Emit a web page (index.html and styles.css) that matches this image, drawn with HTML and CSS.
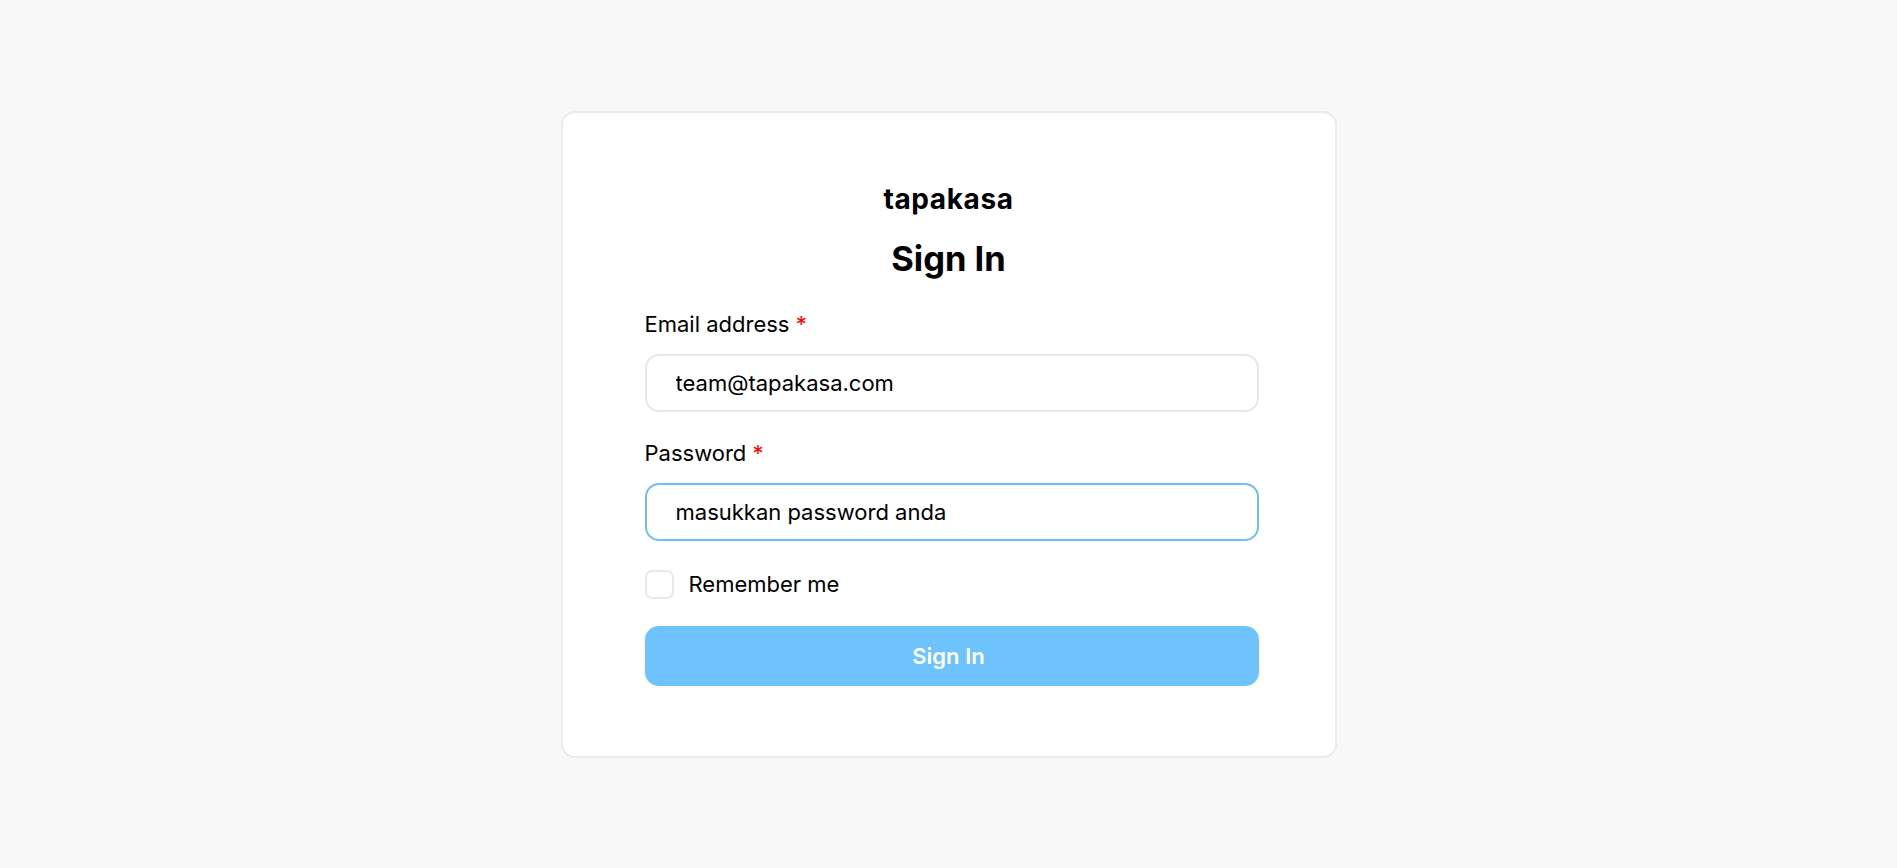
FILE: index.html
```html
<!DOCTYPE html>
<html lang="en">
<head>
<meta charset="utf-8">
<title>Sign In - tapakasa</title>
<link rel="stylesheet" href="styles.css">
</head>
<body>
<main class="page">
  <section class="card">
    <div class="brand">tapakasa</div>
    <h1 class="title">Sign In</h1>
    <form class="form">
      <div class="field">
        <label class="label" for="email">Email address <span class="req">*</span></label>
        <input class="input" id="email" type="text" value="team@tapakasa.com">
      </div>
      <div class="field">
        <label class="label" for="password">Password <span class="req">*</span></label>
        <input class="input input-focus" id="password" type="text" value="masukkan password anda">
      </div>
      <label class="remember">
        <span class="checkbox"></span>
        <span class="remember-text">Remember me</span>
      </label>
      <button class="btn" type="button">Sign In</button>
    </form>
  </section>
</main>
</body>
</html>
```
FILE: styles.css
```css
* { box-sizing: border-box; }
html, body { margin: 0; padding: 0; }
body {
  background: #f8f8f8;
  font-family: Inter, "Noto Sans", sans-serif;
  color: #000;
}
.page {
  min-height: 100vh;
  display: flex;
  align-items: center;
  justify-content: center;
}
.card {
  width: 776px;
  background: #fff;
  border: 2px solid #ebebeb;
  border-radius: 14px;
  padding: 69px 82px 70px 82px;
}
.brand {
  text-align: center;
  font-size: 28px;
  line-height: 34px;
  font-weight: 700;
  letter-spacing: 0.6px;
}
.title {
  margin: 22px 0 0 0;
  text-align: center;
  font-size: 34.5px;
  line-height: 42px;
  font-weight: 700;
}
.form {
  margin-top: 30px;
  display: flex;
  flex-direction: column;
  width: calc(100% + 6px);
}
.field {
  display: flex;
  flex-direction: column;
  gap: 16px;
}
.field + .field { margin-top: 27px; }
.label {
  font-size: 22px;
  line-height: 28px;
  font-weight: 400;
}
.req { color: #f00; }
.input {
  height: 58px;
  width: 100%;
  border: 2px solid #e8e8e8;
  border-radius: 14px;
  padding: 0 29px;
  font-family: inherit;
  font-size: 22px;
  color: #000;
  background: #fff;
  outline: none;
}
.input-focus { border-color: #6cbff9; }
.remember {
  margin-top: 29px;
  display: flex;
  align-items: center;
  gap: 15px;
  height: 29px;
}
.checkbox {
  width: 29px;
  height: 29px;
  border: 2px solid #e9e9e9;
  border-radius: 7px;
  background: #fff;
}
.remember-text {
  font-size: 22px;
  line-height: 28px;
}
.btn {
  margin-top: 27px;
  height: 60px;
  width: 100%;
  border: none;
  border-radius: 14px;
  padding: 0 6px 0 0;
  background: #6ec3fd;
  color: #fff;
  font-family: inherit;
  font-size: 22px;
  font-weight: 600;
}
```
